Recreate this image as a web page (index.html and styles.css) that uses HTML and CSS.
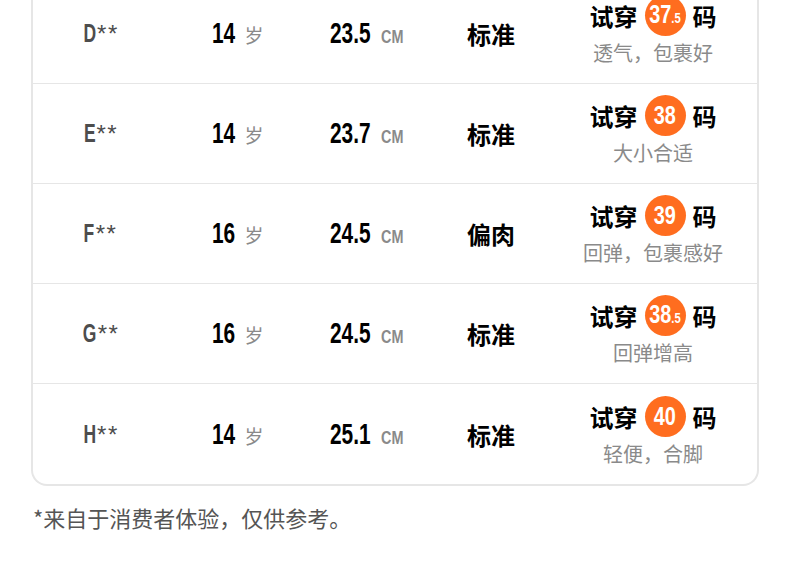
FILE: index.html
```html
<!DOCTYPE html>
<html lang="zh-CN">
<head>
<meta charset="utf-8">
<link rel="stylesheet" href="styles.css">
</head>
<body>
<div class="card">
  <div class="row">
    <div class="c name"><span class="ltr">D</span><span class="ast">**</span></div>
    <div class="c"><span class="num n2">14</span><span class="unit-cn">岁</span></div>
    <div class="c"><span class="num n4">23.5</span><span class="unit">CM</span></div>
    <div class="c type">标准</div>
    <div class="c trial">
      <div class="try"><span>试穿</span><span class="badge"><span class="bn">37<small>.5</small></span></span><span>码</span></div>
      <div class="note">透气，包裹好</div>
    </div>
  </div>
  <div class="row">
    <div class="c name"><span class="ltr">E</span><span class="ast">**</span></div>
    <div class="c"><span class="num n2">14</span><span class="unit-cn">岁</span></div>
    <div class="c"><span class="num n4">23.7</span><span class="unit">CM</span></div>
    <div class="c type">标准</div>
    <div class="c trial">
      <div class="try"><span>试穿</span><span class="badge"><span class="bn">38</span></span><span>码</span></div>
      <div class="note">大小合适</div>
    </div>
  </div>
  <div class="row">
    <div class="c name"><span class="ltr">F</span><span class="ast">**</span></div>
    <div class="c"><span class="num n2">16</span><span class="unit-cn">岁</span></div>
    <div class="c"><span class="num n4">24.5</span><span class="unit">CM</span></div>
    <div class="c type">偏肉</div>
    <div class="c trial">
      <div class="try"><span>试穿</span><span class="badge"><span class="bn">39</span></span><span>码</span></div>
      <div class="note">回弹，包裹感好</div>
    </div>
  </div>
  <div class="row">
    <div class="c name"><span class="ltr">G</span><span class="ast">**</span></div>
    <div class="c"><span class="num n2">16</span><span class="unit-cn">岁</span></div>
    <div class="c"><span class="num n4">24.5</span><span class="unit">CM</span></div>
    <div class="c type">标准</div>
    <div class="c trial">
      <div class="try"><span>试穿</span><span class="badge"><span class="bn">38<small>.5</small></span></span><span>码</span></div>
      <div class="note">回弹增高</div>
    </div>
  </div>
  <div class="row">
    <div class="c name"><span class="ltr">H</span><span class="ast">**</span></div>
    <div class="c"><span class="num n2">14</span><span class="unit-cn">岁</span></div>
    <div class="c"><span class="num n4">25.1</span><span class="unit">CM</span></div>
    <div class="c type">标准</div>
    <div class="c trial">
      <div class="try"><span>试穿</span><span class="badge"><span class="bn">40</span></span><span>码</span></div>
      <div class="note">轻便，合脚</div>
    </div>
  </div>
</div>
<p class="footnote">*来自于消费者体验，仅供参考。</p>
</body>
</html>
```

FILE: styles.css
```css
* { box-sizing: border-box; }
html, body { margin: 0; padding: 0; background: #fff; }
body {
  font-family: "Noto Sans CJK SC", "Noto Sans", sans-serif;
  color: #000;
  width: 790px;
  overflow: hidden;
}
.card {
  margin: -16px 31px 0 31px;
  border: 2px solid #e6e6e6;
  border-top: none;
  border-radius: 0 0 16px 16px;
}
.row {
  display: grid;
  grid-template-columns: 136px 138px 120px 128px 1fr;
  height: 100px;
  border-bottom: 1px solid #e6e6e6;
  align-items: center;
}
.row:last-child { border-bottom: none; }
.c {
  display: flex;
  justify-content: center;
  align-items: baseline;
}
.ltr, .num, .unit, .bn {
  font-family: "Liberation Sans", "DejaVu Sans", sans-serif;
  font-weight: 700;
  display: inline-block;
}
.name { color: #4d4d4d; }
.ltr {
  font-size: 25px;
  transform: scaleX(0.7);
  transform-origin: right center;
  margin-left: -0.21em;
}
.ast {
  font-family: "Liberation Sans", sans-serif;
  font-weight: 400;
  font-size: 24px;
  letter-spacing: 1.5px;
  margin-left: 1px;
}
.num {
  font-size: 29px;
  color: #000;
  transform: scaleX(0.72);
  transform-origin: left center;
}
.n2 { margin-right: -0.311em; }
.n4 { margin-right: -0.545em; }
.unit-cn {
  font-size: 19px;
  color: #8a8a8a;
  margin-left: 9px;
}
.unit {
  font-size: 18px;
  color: #8a8a8a;
  margin-left: 10px;
  transform: scaleX(0.8);
  transform-origin: left center;
  margin-right: -0.31em;
}
.type {
  font-size: 24px;
  font-weight: 700;
}
.trial {
  flex-direction: column;
  align-items: center;
  margin-bottom: 7px;
  margin-right: 6px;
}
.try {
  display: flex;
  align-items: center;
  gap: 7px;
  font-size: 24px;
  font-weight: 700;
  line-height: 41px;
}
.badge {
  width: 41px;
  height: 41px;
  border-radius: 50%;
  background: #ff6d1f;
  color: #fff;
  display: flex;
  justify-content: center;
  align-items: center;
  line-height: 41px;
}
.bn {
  font-size: 26.5px;
  transform: scaleX(0.75);
  transform-origin: center;
  white-space: nowrap;
}
.bn small {
  font-size: 15px;
}
.note {
  font-size: 20px;
  color: #8a8a8a;
  line-height: 24px;
  margin-top: 5px;
}
.footnote {
  margin: 16px 0 0 33px;
  font-size: 22px;
  line-height: 30px;
  color: #555;
}
```
